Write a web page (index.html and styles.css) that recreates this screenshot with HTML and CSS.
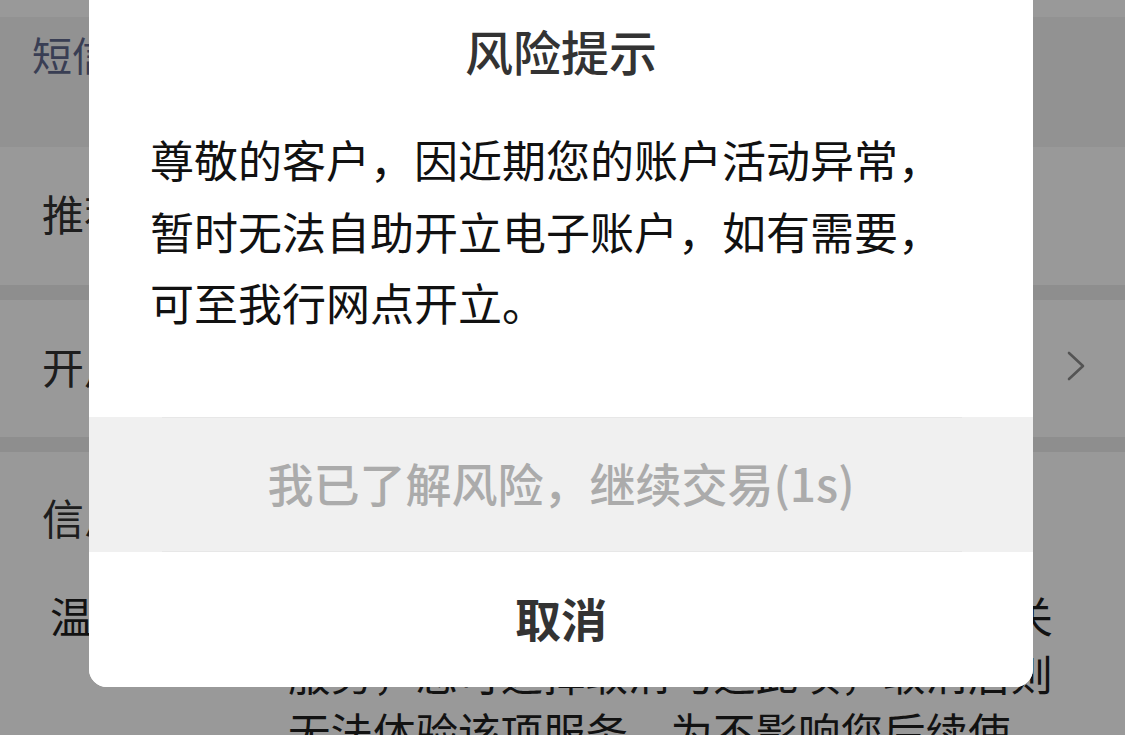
FILE: index.html
```html
<!DOCTYPE html>
<html lang="zh-CN">
<head>
<meta charset="utf-8">
<title>风险提示</title>
<link rel="stylesheet" href="styles.css">
</head>
<body>
<div class="page">
  <div class="top-strip"></div>
  <section class="row row-sms"><span class="sms-label">短信通知服务</span></section>
  <section class="row row-white"><span class="label">推荐人信息</span></section>
  <div class="gap"></div>
  <section class="row row-white row-link">
    <span class="label">开户网点</span>
    <svg class="chevron" width="22" height="32" viewBox="0 0 22 32"><path d="M4 3 L18 16 L4 29" fill="none" stroke="#8c8c8c" stroke-width="2.6" stroke-linecap="round" stroke-linejoin="round"/></svg>
  </section>
  <div class="gap"></div>
  <section class="info">
    <div class="label info-title">信息推送授权</div>
    <div class="tips">
      <span class="tips-label">温馨提示：</span>
      <p class="tips-text">开启后，依据您的偏好为您精准推荐相关<br>服务，您可选择取消勾选此项，取消后则<br>无法体验该项服务，为不影响您后续使<br>用，请谨慎选择。</p>
    </div>
  </section>
</div>
<div class="mask"></div>
<div class="dialog">
  <h2 class="dialog-title">风险提示</h2>
  <p class="dialog-body">尊敬的客户，因近期您的账户活动异常，暂时无法自助开立电子账户，如有需要，可至我行网点开立。</p>
  <div class="dialog-actions">
    <div class="btn btn-confirm">我已了解风险，继续交易(1s)</div>
    <div class="btn btn-cancel">取消</div>
  </div>
</div>
</body>
</html>
```

FILE: styles.css
```css
* { box-sizing: border-box; }
html, body {
  margin: 0;
  padding: 0;
  width: 1125px;
  height: 735px;
  overflow: hidden;
  font-family: "Noto Sans CJK SC", "Noto Sans", sans-serif;
}
body { position: relative; background: #fff; }

.page { display: flex; flex-direction: column; }
.top-strip { height: 17px; background: #fff; }
.row { display: flex; }
.row-sms {
  height: 130px;
  background: #f3f3f3;
  padding: 12px 0 0 32px;
  align-items: flex-start;
}
.sms-label { font-size: 40px; line-height: 50px; color: #5f688c; }
.row-white {
  background: #fff;
  height: 138px;
  padding-left: 42px;
  padding-bottom: 6px;
  align-items: center;
}
.row-link { height: 137px; justify-content: space-between; padding-right: 38px; }
.label { font-size: 42px; line-height: 58px; color: #333; }
.gap { height: 15px; background: #ededed; }
.info { background: #fff; padding: 36px 0 0 42px; }
.tips { display: flex; margin-top: 40px; }
.tips-label {
  font-size: 42.5px;
  line-height: 58px;
  color: #1e1e1e;
  padding-left: 8px;
  width: 246px;
  flex: none;
}
.tips-text {
  margin: 0;
  font-size: 42.5px;
  line-height: 58px;
  color: #1e1e1e;
  white-space: nowrap;
}

.mask {
  position: absolute;
  inset: 0;
  background: rgba(0, 0, 0, 0.4);
}

.dialog {
  position: absolute;
  left: 89px;
  top: -20px;
  width: 944px;
  background: #fff;
  border-radius: 18px;
  overflow: hidden;
}
.dialog-title {
  margin: 0;
  padding-top: 40px;
  font-size: 48px;
  line-height: 60px;
  font-weight: 500;
  color: #333;
  text-align: center;
}
.dialog-body {
  margin: 44px 0 0;
  padding: 0 61px;
  font-size: 44px;
  line-height: 71.5px;
  color: #111;
}
.dialog-actions { margin-top: 78.5px; display: flex; flex-direction: column; }
.btn {
  height: 135px;
  display: flex;
  align-items: center;
  justify-content: center;
  font-size: 46px;
  font-weight: 500;
  padding-bottom: 6px;
  position: relative;
}
.btn-confirm { background: #f0f0f0; color: #ababab; }
.btn-confirm::before,
.btn-confirm::after {
  content: "";
  position: absolute;
  left: 73px;
  right: 71px;
  height: 1px;
  background: #e7e7e7;
}
.btn-confirm::before { top: 0; }
.btn-confirm::after { bottom: 0; }
.btn-cancel { background: #fff; color: #333; font-weight: 600; }
```
